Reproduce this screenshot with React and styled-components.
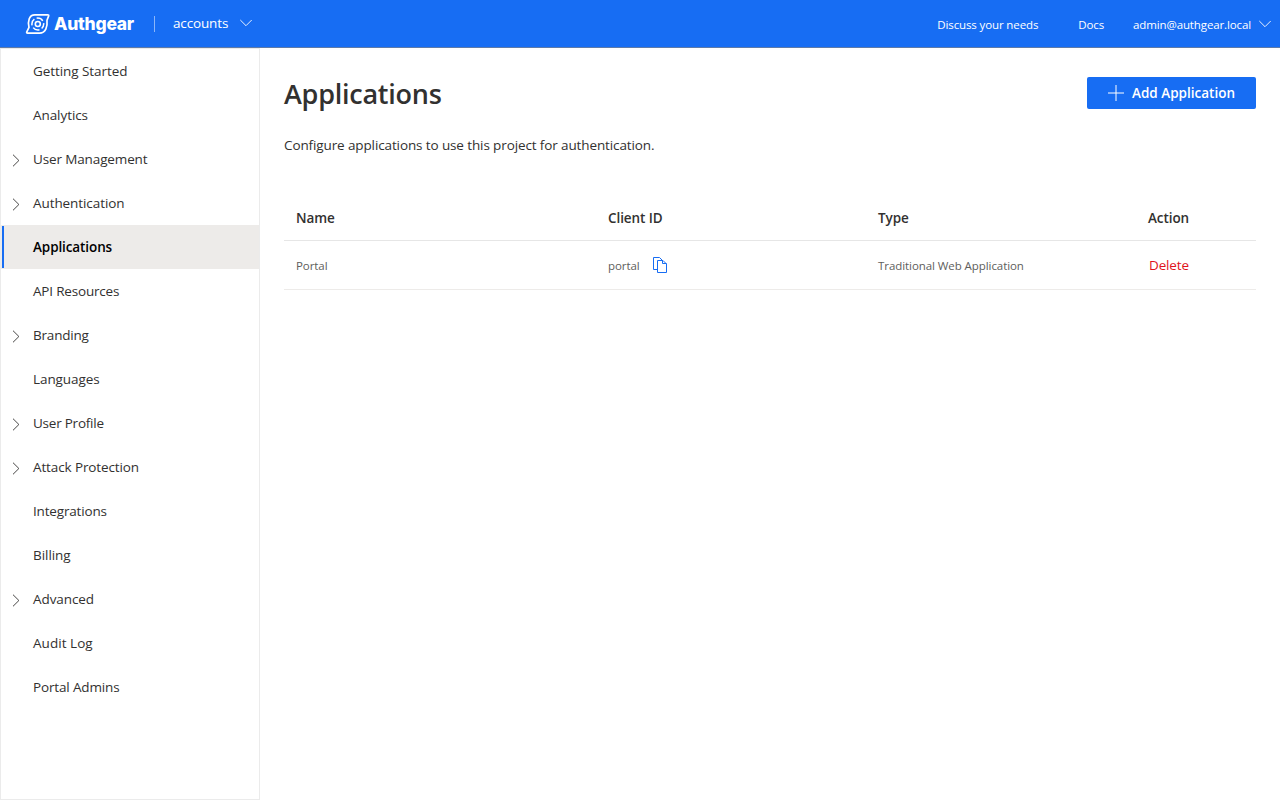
import React, { useState } from 'react'
import styled, { createGlobalStyle } from 'styled-components'

const GlobalStyle = createGlobalStyle`
  * {
    box-sizing: border-box;
  }

  body {
    margin: 0;
    background: #fff;
    color: #323130;
    font-family: 'Open Sans', 'Noto Sans', sans-serif;
    font-size: 13.5px;
    -webkit-font-smoothing: antialiased;
  }
`

const Page = styled.div`
  display: flex;
  flex-direction: column;
  height: 100vh;
`

const Header = styled.header`
  display: flex;
  align-items: center;
  flex: none;
  height: 48px;
  padding: 0 9px 0 25px;
  background: #176df3;
  border-bottom: 1px solid #5f7ba8;
  color: #fff;
`

const Logo = styled.div`
  display: flex;
  align-items: center;
  gap: 4px;
  width: 129px;
`

const LogoText = styled.span`
  font-family: Inter, sans-serif;
  font-size: 17.5px;
  font-weight: 800;
  line-height: 24px;
  letter-spacing: -0.25px;
`

const Divider = styled.div`
  width: 1px;
  height: 16px;
  background: #8bb6f9;
`

const ProjectName = styled.div`
  display: flex;
  align-items: center;
  gap: 12px;
  margin-left: 18px;
  padding-bottom: 2px;
  line-height: 20px;
  letter-spacing: -0.15px;
`

const HeaderLinks = styled.nav`
  display: flex;
  align-items: center;
  margin-left: auto;
  font-size: 11.5px;
  line-height: 16px;
`

const HeaderLink = styled.span`
  margin-right: ${({ $gap }) => $gap}px;
  padding-top: 2px;
  letter-spacing: -0.12px;
  white-space: nowrap;
`

const Body = styled.div`
  display: flex;
  flex: 1;
  min-height: 0;
`

const Sidebar = styled.nav`
  flex: none;
  width: 260px;
  border: 1px solid #ebebeb;
`

const NavItem = styled.div`
  display: flex;
  align-items: center;
  height: 44px;
  padding-bottom: 1px;
  color: #323130;
  cursor: pointer;
  ${({ $selected }) => $selected && `
    background: #edebe9;
    color: #000;
    font-weight: 600;
  `}
`

const NavMark = styled.span`
  width: 2px;
  height: 42px;
  margin-left: 1px;
  background: ${({ $selected }) => $selected ? '#176df3' : 'transparent'};
`

const NavIcon = styled.span`
  display: flex;
  width: 29px;
  padding: 3px 0 0 8px;
`

const NavName = styled.span`
  letter-spacing: ${({ $spacing }) => $spacing || 0}px;
`

const Content = styled.main`
  flex: 1;
  padding: 29px 24px;
`

const TitleRow = styled.div`
  display: flex;
  justify-content: space-between;
  height: 48px;
`

const Title = styled.h1`
  margin: 0;
  font-size: 27px;
  font-weight: 600;
  line-height: 34px;
  letter-spacing: -0.25px;
`

const AddButton = styled.button`
  display: flex;
  align-items: center;
  gap: 8px;
  width: 169px;
  height: 32px;
  padding: 0 0 0 21px;
  background: #176df3;
  border: none;
  border-radius: 2px;
  color: #fff;
  font: inherit;
  font-weight: 600;
  white-space: nowrap;
  cursor: pointer;
`

const Description = styled.p`
  margin: 10px 0 0;
  line-height: 20px;
  letter-spacing: -0.115px;
`

const Table = styled.div`
  margin-top: 41px;
`

const Row = styled.div`
  display: grid;
  grid-template-columns: 312px 270px 270px 1fr;
  align-items: center;
  height: ${({ $head }) => $head ? 45 : 49}px;
  padding: 0 0 0 12px;
  border-bottom: 1px solid ${({ $head }) => $head ? '#e6e6e6' : '#edebe9'};
  letter-spacing: -0.07px;
  ${({ $head }) => $head && `
    font-weight: 600;
  `}
`

const Cell = styled.div`
  display: flex;
  align-items: center;
  color: #605e5c;
  font-size: 11.5px;
  line-height: 16px;
`

const CellText = styled.span`
  padding-top: 2px;
`

const CopyButton = styled.span`
  display: flex;
  margin-left: 12px;
  cursor: pointer;
`

const DeleteButton = styled.span`
  padding-left: 1px;
  color: #e0131c;
  letter-spacing: -0.15px;
  cursor: pointer;
`

const navItems = [
  { name: 'Getting Started', spacing: -0.07 },
  { name: 'Analytics', spacing: -0.07 },
  { name: 'User Management', expandable: true, spacing: -0.13 },
  { name: 'Authentication', expandable: true, spacing: -0.08 },
  { name: 'Applications', spacing: -0.1 },
  { name: 'API Resources', spacing: -0.19 },
  { name: 'Branding', expandable: true, spacing: -0.2 },
  { name: 'Languages', spacing: -0.08 },
  { name: 'User Profile', expandable: true, spacing: -0.23 },
  { name: 'Attack Protection', expandable: true, spacing: -0.12 },
  { name: 'Integrations', spacing: -0.17 },
  { name: 'Billing', spacing: -0.05 },
  { name: 'Advanced', expandable: true, spacing: -0.08 },
  { name: 'Audit Log', spacing: 0.05 },
  { name: 'Portal Admins', spacing: -0.15 }
]

const LogoIcon = () => (
  <svg width='25' height='22' viewBox='0 0 25 22' fill='none' stroke='#fff' strokeWidth='1.7' strokeLinejoin='round'>
    <path d='M9.8 1.8H22.6Q24 1.8 23.6 3.1L22 7.2C22.7 13.8 20.6 20.1 14.6 20.1H2.6Q1.3 20.1 1.8 18.8L4 14.4C2.5 8 4.2 1.8 9.8 1.8Z' />
    <circle cx='12.8' cy='11' r='5.9' strokeWidth='1.5' strokeDasharray='6.9 2.4' strokeDashoffset='2' />
    <circle cx='12.8' cy='11' r='2.5' strokeWidth='1.6' />
  </svg>
)

const ChevronDown = () => (
  <svg width='12' height='8' viewBox='0 0 12 8' fill='none' stroke='#fff' strokeWidth='0.9'>
    <path d='M0.3 1L6 6.7L11.7 1' />
  </svg>
)

const ChevronRight = () => (
  <svg width='9' height='13' viewBox='0 0 9 13' fill='none' stroke='#323130' strokeWidth='0.9'>
    <path d='M1 0.7L6.9 6.5L1 12.3' />
  </svg>
)

const PlusIcon = () => (
  <svg width='16' height='16' viewBox='0 0 16 16' fill='none' stroke='#fff' strokeWidth='1'>
    <path d='M0 8H16M8 0V16' />
  </svg>
)

const CopyIcon = () => (
  <svg width='16' height='16' viewBox='0 0 16 16' fill='none' stroke='#176df3' strokeWidth='1'>
    <path d='M5 12.5H1.5V0.5H7.5L10 3' />
    <path d='M5.5 3.5H11L14.5 7V15.5H5.5Z' />
    <path d='M10.5 3.5V6.5H14.5' />
  </svg>
)

export default function App() {
  const [selected, setSelected] = useState('Applications')

  return (
    <Page>
      <GlobalStyle />
      <Header>
        <Logo>
          <LogoIcon />
          <LogoText>Authgear</LogoText>
        </Logo>
        <Divider />
        <ProjectName>
          accounts
          <ChevronDown />
        </ProjectName>
        <HeaderLinks>
          <HeaderLink $gap={40}>Discuss your needs</HeaderLink>
          <HeaderLink $gap={29}>Docs</HeaderLink>
          <HeaderLink $gap={8}>admin@authgear.local</HeaderLink>
          <ChevronDown />
        </HeaderLinks>
      </Header>
      <Body>
        <Sidebar>
          {navItems.map(item => (
            <NavItem key={item.name} $selected={item.name === selected} onClick={() => setSelected(item.name)}>
              <NavMark $selected={item.name === selected} />
              <NavIcon>{item.expandable && <ChevronRight />}</NavIcon>
              <NavName $spacing={item.spacing}>{item.name}</NavName>
            </NavItem>
          ))}
        </Sidebar>
        <Content>
          <TitleRow>
            <Title>Applications</Title>
            <AddButton>
              <PlusIcon />
              Add Application
            </AddButton>
          </TitleRow>
          <Description>Configure applications to use this project for authentication.</Description>
          <Table>
            <Row $head>
              <span>Name</span>
              <span>Client ID</span>
              <span>Type</span>
              <span>Action</span>
            </Row>
            <Row>
              <Cell><CellText>Portal</CellText></Cell>
              <Cell>
                <CellText>portal</CellText>
                <CopyButton><CopyIcon /></CopyButton>
              </Cell>
              <Cell><CellText>Traditional Web Application</CellText></Cell>
              <DeleteButton>Delete</DeleteButton>
            </Row>
          </Table>
        </Content>
      </Body>
    </Page>
  )
}
